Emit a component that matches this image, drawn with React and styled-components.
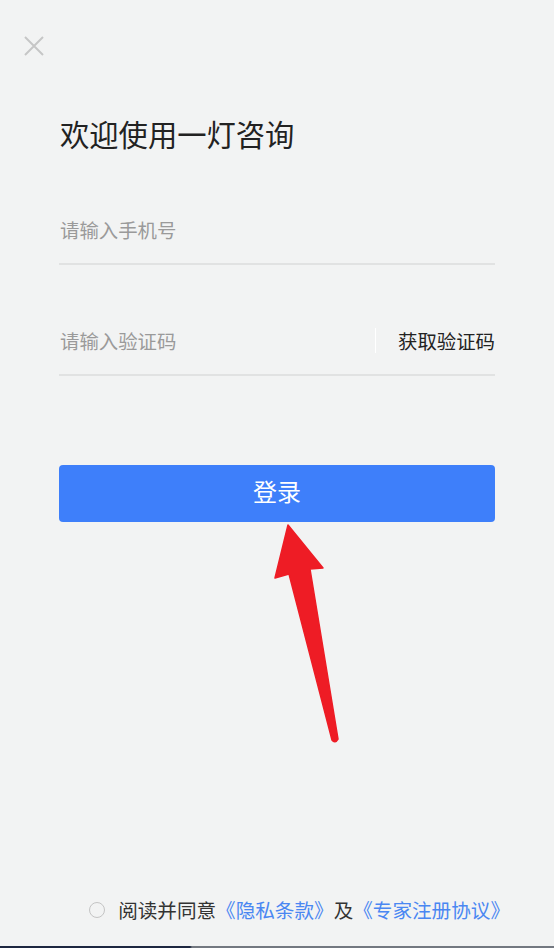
import React, { useState } from "react";
import styled, { createGlobalStyle } from "styled-components";

const GlobalStyle = createGlobalStyle`
  html, body {
    margin: 0;
    padding: 0;
    background: #f2f3f3;
  }
  * {
    box-sizing: border-box;
  }
  body {
    font-family: "Noto Sans CJK SC", "Noto Sans", sans-serif;
  }
`;

const Page = styled.div`
  position: relative;
  width: 554px;
  height: 948px;
  background: #f2f3f3;
  display: flex;
  flex-direction: column;
  overflow: hidden;
`;

const CloseButton = styled.button`
  width: 20px;
  height: 20px;
  margin: 36px 0 0 24px;
  padding: 0;
  border: none;
  background: none;
  cursor: pointer;
  display: flex;
`;

const Form = styled.div`
  display: flex;
  flex-direction: column;
  padding: 0 59px;
`;

const Title = styled.h1`
  margin: 57px 0 0 1px;
  font-size: 29.3px;
  font-weight: 400;
  line-height: 40px;
  color: #222;
`;

const Field = styled.div`
  display: flex;
  align-items: center;
  height: 69px;
  margin-top: ${(p) => p.$top}px;
  border-bottom: 2px solid #e1e2e2;
`;

const Input = styled.input`
  flex: 1;
  min-width: 0;
  border: none;
  outline: none;
  background: transparent;
  padding: 0 0 0 1px;
  font-family: inherit;
  font-size: 19.4px;
  color: #222;

  &::placeholder {
    color: #9a9a9a;
  }
`;

const Divider = styled.span`
  width: 1px;
  height: 25px;
  background: #ffffff;
  margin-right: 22px;
`;

const CodeButton = styled.button`
  border: none;
  background: none;
  padding: 0;
  font-family: inherit;
  font-size: 19.4px;
  color: #222;
  cursor: pointer;
`;

const Submit = styled.button`
  margin-top: 89px;
  height: 57px;
  padding: 0 0 6px;
  border: none;
  border-radius: 4px;
  background: #3e7ffa;
  color: #fff;
  font-family: inherit;
  font-size: 24px;
  cursor: pointer;
`;

const Agreement = styled.label`
  margin-top: auto;
  margin-bottom: 22px;
  display: flex;
  align-items: center;
  justify-content: flex-end;
  padding-right: 44px;
  font-size: 19.6px;
  color: #333;
  cursor: pointer;
`;

const Radio = styled.span`
  width: 16px;
  height: 16px;
  border-radius: 50%;
  border: 1.5px solid ${(p) => (p.$checked ? "#3e7ffa" : "#c4c4c4")};
  background: ${(p) => (p.$checked ? "#3e7ffa" : "transparent")};
  margin-right: 13px;
`;

const Link = styled.a`
  color: #4a87f2;
  text-decoration: none;
`;

const WindowEdge = styled.div`
  height: 2px;
  background: linear-gradient(to right, #1d2740 0, #1d2740 190px, #737880 192px, #737880 100%);
`;

const Pointer = styled.svg`
  position: absolute;
  left: 0;
  top: 0;
  pointer-events: none;
`;

export default function App() {
  const [agreed, setAgreed] = useState(false);

  return (
    <Page>
      <GlobalStyle />
      <CloseButton aria-label="关闭">
        <svg width="20" height="20" viewBox="0 0 20 20">
          <path d="M1 1 L19 19 M19 1 L1 19" stroke="#c6c6c6" strokeWidth="2" fill="none" />
        </svg>
      </CloseButton>

      <Form>
        <Title>欢迎使用一灯咨询</Title>
        <Field $top={43}>
          <Input placeholder="请输入手机号" />
        </Field>
        <Field $top={42}>
          <Input placeholder="请输入验证码" />
          <Divider />
          <CodeButton>获取验证码</CodeButton>
        </Field>
        <Submit>登录</Submit>
      </Form>

      <Agreement onClick={() => setAgreed((v) => !v)}>
        <Radio $checked={agreed} />
        阅读并同意<Link href="#">《隐私条款》</Link>及<Link href="#">《专家注册协议》</Link>
      </Agreement>
      <WindowEdge />

      <Pointer width="554" height="948" viewBox="0 0 554 948">
        <path
          d="M288 525 L323 568 L310 569 L338 739 Q335 744 332 740 L289 574 L275 578 Z"
          fill="#ee1c25"
          stroke="#ee1c25"
          strokeWidth="1.5"
          strokeLinejoin="round"
        />
      </Pointer>
    </Page>
  );
}
